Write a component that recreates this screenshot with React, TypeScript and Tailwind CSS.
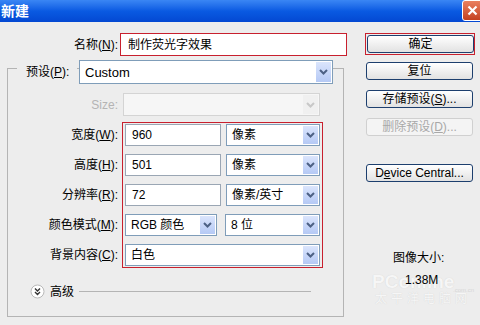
import type { ReactNode } from 'react'

const font = 'font-["Liberation_Sans","Noto_Sans_CJK_SC",sans-serif]'

const Chevron = (props: { disabled?: boolean }) => (
	<svg width="9" height="6" viewBox="0 0 9 6">
		<path
			d="M1 1 L4.5 4.5 L8 1"
			fill="none"
			stroke={props.disabled ? '#c8c8c8' : '#4d6185'}
			strokeWidth="2"
		/>
	</svg>
)

const Select = (props: { value?: string; disabled?: boolean; big?: boolean }) => (
	<div
		className={`flex h-full w-full items-center border ${
			props.disabled ? 'border-[#d4d4d4] bg-[#f6f6f6]' : 'border-[#7f9db9] bg-white'
		}`}
	>
		<span
			className={`flex-1 pl-[5px] leading-none text-black ${props.big ? 'text-[13px]' : 'text-[12px]'}`}
		>
			{props.value}
		</span>
		<span
			className={`mr-[1px] flex h-[calc(100%-2px)] w-[15px] items-center justify-center ${
				props.disabled ? 'bg-[#f0f0f0]' : 'bg-linear-to-b from-[#dbe5fc] to-[#b5c9f5]'
			}`}
		>
			<Chevron disabled={props.disabled} />
		</span>
	</div>
)

const Input = (props: { value: string }) => (
	<div className="flex h-full w-full items-center border border-[#9aa6b4] bg-white pl-[6px] text-[12px] leading-none">
		{props.value}
	</div>
)

const Button = (props: { children: ReactNode; disabled?: boolean }) => (
	<div
		className={`flex h-[18px] w-[107px] items-center justify-center rounded-[3px] border text-[12px] leading-none ${
			props.disabled
				? 'border-[#d0d0d0] bg-[#f4f4f4] text-[#a8a8a8]'
				: 'border-[#1d3f6e] bg-linear-to-b from-white to-[#e2e2e2] text-black'
		}`}
	>
		{props.children}
	</div>
)

const Label = (props: { children: ReactNode }) => (
	<div className="flex h-[22px] items-center justify-end text-[12px] leading-none text-black">
		{props.children}
	</div>
)

const AdvancedIcon = () => (
	<svg width="15" height="15" viewBox="0 0 15 15">
		<circle cx="7.5" cy="7.5" r="6.5" fill="#ffffff" stroke="#b9b9b9" />
		<path d="M5 4.5 L7.5 7 L10 4.5 M5 8 L7.5 10.5 L10 8" fill="none" stroke="#333" strokeWidth="1.4" />
	</svg>
)

export default function App() {
	return (
		<div className={`flex h-[325px] w-[480px] flex-col overflow-hidden bg-[#ededed] ${font}`}>
			<div className="flex h-[22px] items-center justify-between bg-linear-to-b from-[#3a86f4] via-[#0a5ae2] to-[#0448d2]">
				<span className="pl-[1px] text-[14px] leading-none font-bold text-white">新建</span>
				<div className="h-[21px] w-[18px] self-start overflow-hidden">
					<div className="flex h-[21px] w-[21px] items-center justify-center rounded-[3px] border border-white bg-linear-to-b from-[#e9805f] to-[#c4401f]">
						<svg width="11" height="11" viewBox="0 0 11 11">
							<path d="M1.5 1.5 L9.5 9.5 M9.5 1.5 L1.5 9.5" stroke="#fff" strokeWidth="2.2" />
						</svg>
					</div>
				</div>
			</div>

			<div className="flex flex-1">
				<div className="flex w-[365px] flex-col pt-[11px]">
					<div className="flex h-[23px] items-center">
						<div className="w-[118px] text-right text-[12px] leading-none">
							名称(<u>N</u>):
						</div>
						<div className="ml-[2px] flex h-full w-[227px] items-center border border-[#c8202e] bg-white pl-[7px] text-[12px] leading-none">
							制作荧光字效果
						</div>
					</div>

					<div className="mt-[12px] ml-[7px] flex h-[249px] w-[337px] flex-col border border-[#b4b4b4]">
						<div className="-mt-[9px] ml-[9px] flex h-[24px] items-center">
							<span className="flex h-full w-[60px] items-center bg-[#ededed] pl-[9px] text-[12px] leading-none">
								预设(<u>P</u>):
							</span>
							<div className="ml-[2px] h-full w-[254px]">
								<Select value="Custom" big />
							</div>
						</div>

						<div className="mt-[9px] flex h-[23px] items-center">
							<div className="w-[110px] text-right text-[12px] leading-none text-[#b4b4b4]">Size:</div>
							<div className="ml-[5px] h-full w-[197px]">
								<Select disabled />
							</div>
						</div>

						<div className="mt-[6px] flex">
							<div className="flex w-[110px] flex-col gap-[8px] pt-[2px]">
								<Label>
									宽度(<u>W</u>):
								</Label>
								<Label>
									高度(<u>H</u>):
								</Label>
								<Label>
									分辨率(<u>R</u>):
								</Label>
								<Label>
									颜色模式(<u>M</u>):
								</Label>
								<Label>
									背景内容(<u>C</u>):
								</Label>
							</div>
							<div className="ml-[4px] flex w-[201px] flex-col gap-[8px] border border-[#c8202e] px-[2px] pt-[1px] pb-[1px]">
								<div className="flex h-[22px] gap-[5px]">
									<div className="w-[96px]">
										<Input value="960" />
									</div>
									<div className="w-[94px]">
										<Select value="像素" />
									</div>
								</div>
								<div className="flex h-[22px] gap-[5px]">
									<div className="w-[96px]">
										<Input value="501" />
									</div>
									<div className="w-[94px]">
										<Select value="像素" />
									</div>
								</div>
								<div className="flex h-[22px] gap-[5px]">
									<div className="w-[96px]">
										<Input value="72" />
									</div>
									<div className="w-[94px]">
										<Select value="像素/英寸" />
									</div>
								</div>
								<div className="flex h-[22px] gap-[8px]">
									<div className="w-[92px]">
										<Select value="RGB 颜色" />
									</div>
									<div className="w-[95px]">
										<Select value="8 位" />
									</div>
								</div>
								<div className="h-[22px]">
									<Select value="白色" />
								</div>
							</div>
						</div>

						<div className="mt-[16px] flex h-[15px] items-center">
							<div className="ml-[22px]">
								<AdvancedIcon />
							</div>
							<span className="ml-[5px] text-[12px] leading-none">高级</span>
							<div className="ml-[5px] h-px w-[232px] bg-[#b4b4b4]" />
						</div>
					</div>
				</div>

				<div className="relative flex flex-1 flex-col pt-[11px]">
					<div className="w-[110px] border border-[#c8202e] p-[1px]">
						<Button>确定</Button>
					</div>
					<div className="mt-[7px] ml-[1px] flex flex-col gap-[10px]">
						<Button>复位</Button>
						<Button>
							存储预设(<u>S</u>)...
						</Button>
						<Button disabled>
							删除预设(<u>D</u>)...
						</Button>
					</div>
					<div className="mt-[28px] ml-[1px]">
						<Button>
							D<u>e</u>vice Central...
						</Button>
					</div>
					<div className="mt-[70px] ml-[28px] text-[12px] leading-none">图像大小:</div>
					<div className="relative z-10 mt-[10px] ml-[40px] text-[12px] leading-none">1.38M</div>
					<div className="pointer-events-none absolute top-[250px] left-[7px] text-[19px] leading-none font-bold whitespace-nowrap text-[#f6f6f6] [text-shadow:0_0_1px_#cfcfcf]">
						PConline
					</div>
					<div className="pointer-events-none absolute top-[265px] left-[88px] text-[6px] leading-none whitespace-nowrap text-[#d6d6d6]">
						.com.cn
					</div>
					<div className="pointer-events-none absolute top-[271px] left-[10px] text-[12px] leading-none tracking-[4px] whitespace-nowrap text-[#f6f6f6] [text-shadow:0_0_1px_#cfcfcf]">
						太平洋电脑网
					</div>
				</div>
			</div>
		</div>
	)
}
